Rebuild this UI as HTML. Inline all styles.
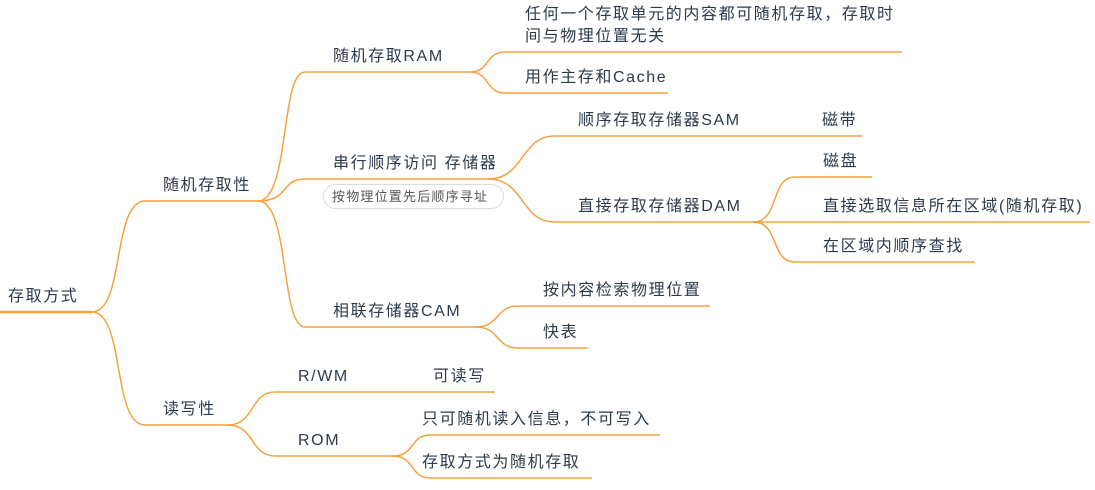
<!DOCTYPE html>
<html><head><meta charset="utf-8"><style>
html,body{margin:0;padding:0;background:#fff;}
svg text{font-family:"Liberation Sans","Noto Sans CJK SC",sans-serif;font-size:16px;fill:#2c3a4b;letter-spacing:1.6px;}
</style></head><body>
<svg width="1095" height="485" viewBox="0 0 1095 485" xmlns="http://www.w3.org/2000/svg">
<g fill="none" stroke="#f7a040" stroke-width="1.5">
<path d="M0 312 H92" stroke-width="2.5"/>
<path d="M92 312 C125 312 112 201 145 201 H260"/>
<path d="M92 312 C125 312 112 425 145 425 H230"/>
<path d="M258 201 C290 201 280 72 305 72 H470"/>
<path d="M258 201 C290 201 280 179 305 179 H490"/>
<path d="M258 201 C290 201 280 327 305 327 H478"/>
<path d="M470 72 C490 72 485 52 505 52 H902"/>
<path d="M470 72 C490 72 485 93 505 93 H668"/>
<path d="M488 179 C525 179 520 136 555 136 H862"/>
<path d="M488 179 C525 179 520 222 555 222 H755"/>
<path d="M753 222 C780 222 770 177 795 177 H872"/>
<path d="M753 222 H1090"/>
<path d="M753 222 C780 222 770 262 795 262 H975"/>
<path d="M476 327 C500 327 495 306 518 306 H710"/>
<path d="M476 327 C500 327 495 348 518 348 H588"/>
<path d="M228 425 C255 425 250 392 275 392 H495"/>
<path d="M228 425 C255 425 250 456 275 456 H395"/>
<path d="M393 456 C415 456 410 435 430 435 H660"/>
<path d="M393 456 C415 456 410 478 430 478 H592"/>
</g>
<rect x="323.5" y="184.5" width="180" height="24" rx="12" fill="#fff" stroke="#dcdcdc"/>
<text x="332" y="201" style="font-size:13px;fill:#555;letter-spacing:1.2px">按物理位置先后顺序寻址</text>
<text x="8" y="301">存取方式</text>
<text x="163" y="190">随机存取性</text>
<text x="163" y="414">读写性</text>
<text x="333" y="61">随机存取RAM</text>
<text x="333" y="168">串行顺序访问 存储器</text>
<text x="333" y="316">相联存储器CAM</text>
<text x="525" y="19">任何一个存取单元的内容都可随机存取，存取时</text>
<text x="525" y="41">间与物理位置无关</text>
<text x="525" y="82">用作主存和Cache</text>
<text x="578" y="125">顺序存取存储器SAM</text>
<text x="822" y="125">磁带</text>
<text x="578" y="211">直接存取存储器DAM</text>
<text x="823" y="166">磁盘</text>
<text x="823" y="211">直接选取信息所在区域(随机存取)</text>
<text x="823" y="251">在区域内顺序查找</text>
<text x="543" y="295">按内容检索物理位置</text>
<text x="543" y="337">快表</text>
<text x="298" y="381">R/WM</text>
<text x="433" y="381">可读写</text>
<text x="298" y="445">ROM</text>
<text x="422" y="424">只可随机读入信息，不可写入</text>
<text x="422" y="467">存取方式为随机存取</text>
</svg>
</body></html>
